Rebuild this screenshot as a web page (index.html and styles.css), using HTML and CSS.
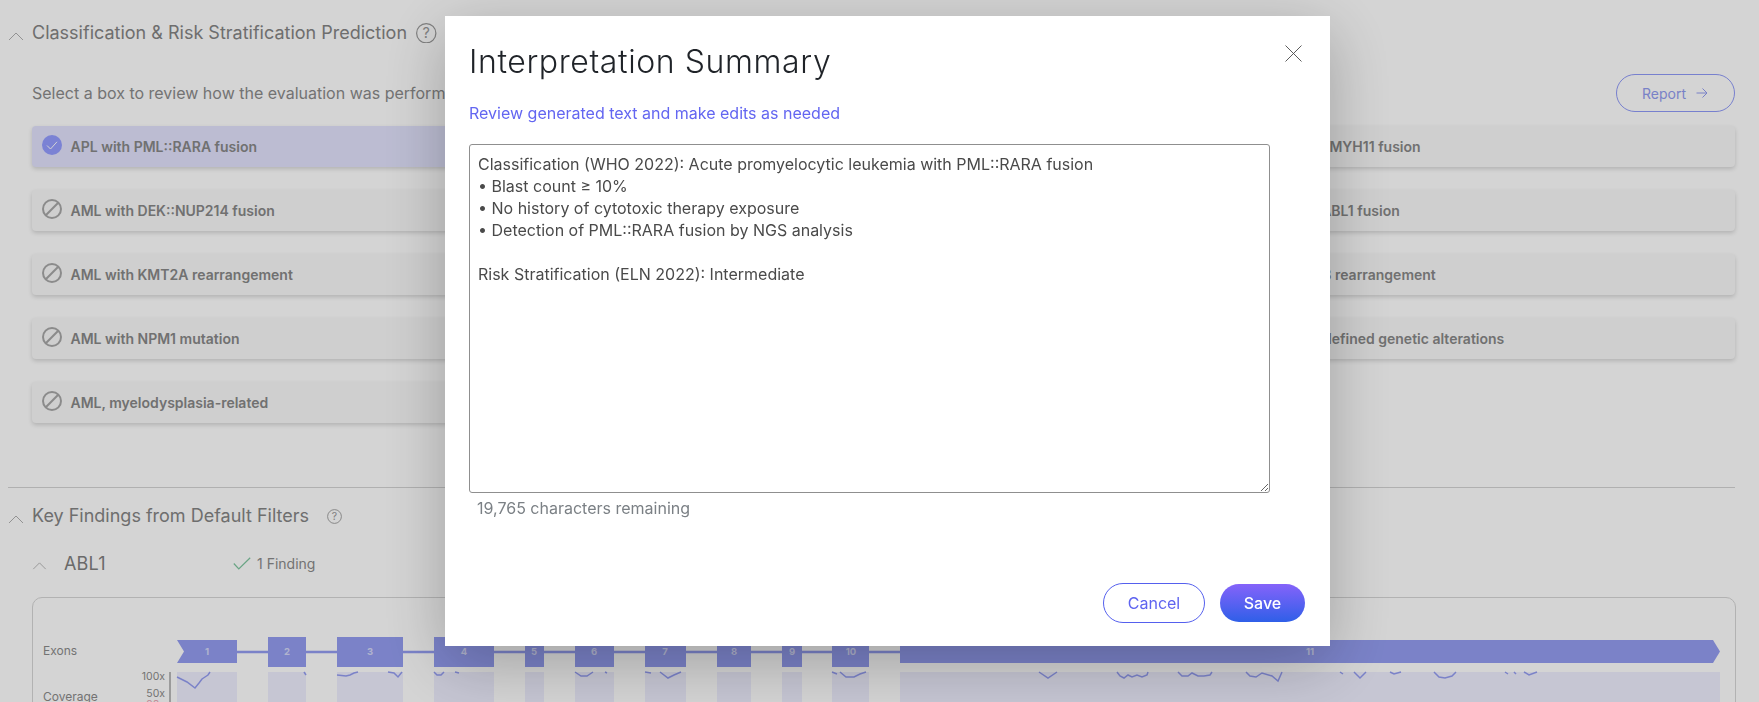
FILE: index.html
```html
<!DOCTYPE html>
<html lang="en">
<head>
<meta charset="utf-8">
<title>Interpretation Summary</title>
<link rel="stylesheet" href="styles.css">
</head>
<body>
<main class="page">
  <section class="classification">
    <header class="section-head">
      <svg class="chevron" viewBox="0 0 16 9"><path d="M1 8 8 1l7 7"/></svg>
      <h2>Classification &amp; Risk Stratification Prediction</h2>
      <svg class="help help-lg" viewBox="0 0 20 20"><circle cx="10" cy="10" r="9.4"/><text x="10" y="14.5">?</text></svg>
    </header>
    <div class="intro">
      <p>Select a box to review how the evaluation was performed.</p>
      <button class="report">Report
        <svg viewBox="0 0 12 12"><path d="M0.5 6H11M6.5 1.5 11 6l-4.5 4.5"/></svg>
      </button>
    </div>
    <div class="grid">
      <div class="col">
        <div class="box selected">
          <svg class="status" viewBox="0 0 20 20"><circle class="fill" cx="10" cy="10" r="10"/><path class="tick" d="M5 10.5 8.5 14 15 6.8"/></svg>
          <span>APL with PML::RARA fusion</span>
        </div>
        <div class="box"><svg class="status" viewBox="0 0 20 20"><circle cx="10" cy="10" r="9"/><path d="M3.8 16.2 16.2 3.8"/></svg><span>AML with DEK::NUP214 fusion</span></div>
        <div class="box"><svg class="status" viewBox="0 0 20 20"><circle cx="10" cy="10" r="9"/><path d="M3.8 16.2 16.2 3.8"/></svg><span>AML with KMT2A rearrangement</span></div>
        <div class="box"><svg class="status" viewBox="0 0 20 20"><circle cx="10" cy="10" r="9"/><path d="M3.8 16.2 16.2 3.8"/></svg><span>AML with NPM1 mutation</span></div>
        <div class="box"><svg class="status" viewBox="0 0 20 20"><circle cx="10" cy="10" r="9"/><path d="M3.8 16.2 16.2 3.8"/></svg><span>AML, myelodysplasia-related</span></div>
      </div>
      <div class="col"></div>
      <div class="col">
        <div class="box"><svg class="status" viewBox="0 0 20 20"><circle cx="10" cy="10" r="9"/><path d="M3.8 16.2 16.2 3.8"/></svg><span>AML with CBFB::MYH11 fusion</span></div>
        <div class="box"><svg class="status" viewBox="0 0 20 20"><circle cx="10" cy="10" r="9"/><path d="M3.8 16.2 16.2 3.8"/></svg><span>AML with BCR::ABL1 fusion</span></div>
        <div class="box"><svg class="status" viewBox="0 0 20 20"><circle cx="10" cy="10" r="9"/><path d="M3.8 16.2 16.2 3.8"/></svg><span>AML with NUP98 rearrangement</span></div>
        <div class="box"><svg class="status" viewBox="0 0 20 20"><circle cx="10" cy="10" r="9"/><path d="M3.8 16.2 16.2 3.8"/></svg><span>AML with other defined genetic alterations</span></div>
      </div>
    </div>
  </section>

  <section class="findings">
    <header class="section-head">
      <svg class="chevron" viewBox="0 0 16 9"><path d="M1 8 8 1l7 7"/></svg>
      <h2>Key Findings from Default Filters</h2>
      <svg class="help help-sm" viewBox="0 0 20 20"><circle cx="10" cy="10" r="9.2"/><text x="10" y="14.5">?</text></svg>
    </header>
    <div class="gene">
      <svg class="chevron chevron-sm" viewBox="0 0 16 9"><path d="M1 8 8 1l7 7"/></svg>
      <h3>ABL1</h3>
      <svg class="found-tick" viewBox="0 0 18 13"><path d="M0.8 6.5 5.800 12 17.200 0.8"/></svg>
      <span class="found">1 Finding</span>
    </div>
    <div class="track">
      <svg class="track-svg" viewBox="0 0 1701 110">
        <g class="cov-bg">
          <rect x="145" y="75" width="60" height="35"/>
          <rect x="236" y="75" width="38" height="35"/>
          <rect x="305" y="75" width="66" height="35"/>
          <rect x="402" y="75" width="60" height="35"/>
          <rect x="493" y="75" width="19" height="35"/>
          <rect x="543" y="75" width="39" height="35"/>
          <rect x="613" y="75" width="41" height="35"/>
          <rect x="685" y="75" width="34" height="35"/>
          <rect x="750" y="75" width="20" height="35"/>
          <rect x="800" y="75" width="37" height="35"/>
          <rect x="868" y="75" width="820" height="35"/>
        </g>
        <path class="intron" d="M180 55H868"/>
        <g class="exon">
          <path d="M145 43H205V66H145L152 54.500Z"/>
          <rect x="236" y="40" width="38" height="30"/>
          <rect x="305" y="40" width="66" height="30"/>
          <rect x="402" y="40" width="60" height="30"/>
          <rect x="493" y="40" width="19" height="30"/>
          <rect x="543" y="40" width="39" height="30"/>
          <rect x="613" y="40" width="41" height="30"/>
          <rect x="685" y="40" width="34" height="30"/>
          <rect x="750" y="40" width="20" height="30"/>
          <rect x="800" y="40" width="37" height="30"/>
          <path d="M868 43H1681L1688 54.500 1681 66H868Z"/>
        </g>
        <g class="exon-num">
          <text x="175" y="58">1</text><text x="255" y="58">2</text><text x="338" y="58">3</text>
          <text x="432" y="58">4</text><text x="502" y="58">5</text><text x="562" y="58">6</text>
          <text x="633" y="58">7</text><text x="702" y="58">8</text><text x="760" y="58">9</text>
          <text x="819" y="58">10</text><text x="1278" y="58">11</text>
        </g>
        <text class="row-label" x="11" y="58">Exons</text>
        <text class="row-label" x="11" y="104">Coverage</text>
        <text class="axis-label" x="133" y="83">100x</text>
        <text class="axis-label" x="133" y="100">50x</text>
        <text class="axis-label low" x="133" y="111">20x</text>
        <path class="axis" d="M138 75V110"/>
        <g class="cov-line">
          <path d="M145 80 155 85 163 91 167 86 170 82 173 80 176 78 178 75"/>
          <path d="M272 75 274 78"/>
          <path d="M305 78 314 79 318 78 322 76 326 75"/>
          <path d="M356 75 362 76 366 80 370 75"/>
          <path d="M402 75 405 78 409 78 412 75M423 75 427 76"/>
          <path d="M543 75 549 79 555 79 561 75M573 75 575 76"/>
          <path d="M613 75 619 76M628 75 636 81 642 78 649 75"/>
          <path d="M800 75 805 77M808 75 814 80 822 80 828 77 834 75"/>
          <path d="M1007 75 1016 81 1025 75"/>
          <path d="M1085 75 1088 79 1092 81 1096 78 1100 80 1105 78 1110 80 1115 78 1116 75"/>
          <path d="M1146 75 1150 79 1156 79 1160 76 1166 79 1172 79 1178 78 1180 75"/>
          <path d="M1214 75 1218 79 1224 80 1230 76 1240 79 1246 84 1250 75"/>
          <path d="M1308 75 1311 77M1322 75 1328 81 1334 75"/>
          <path d="M1358 75 1362 77 1369 75"/>
          <path d="M1402 75 1407 80 1413 81 1420 79 1424 75"/>
          <path d="M1473 75 1476 77M1482 75 1484 77M1492 75 1497 78 1505 75"/>
        </g>
      </svg>
    </div>
  </section>
</main>

<div class="backdrop">
  <div class="modal" role="dialog" aria-labelledby="modal-title">
    <header class="modal-head">
      <h1 id="modal-title">Interpretation Summary</h1>
      <button class="close" aria-label="Close"><svg viewBox="0 0 17 17"><path d="M0.5 0.500 16.500 16.500M16.500 0.500 0.500 16.500"/></svg></button>
    </header>
    <p class="modal-sub">Review generated text and make edits as needed</p>
    <textarea class="summary" spellcheck="false">Classification (WHO 2022): Acute promyelocytic leukemia with PML::RARA fusion
• Blast count ≥ 10%
• No history of cytotoxic therapy exposure
• Detection of PML::RARA fusion by NGS analysis

Risk Stratification (ELN 2022): Intermediate</textarea>
    <p class="remaining">19,765 characters remaining</p>
    <footer class="modal-foot">
      <button class="btn-cancel">Cancel</button>
      <button class="btn-save">Save</button>
    </footer>
  </div>
</div>
</body>
</html>
```

FILE: styles.css
```css
* { box-sizing: border-box; }

html, body {
  margin: 0;
  height: 100%;
  overflow: hidden;
  background: #fff;
  font-family: Inter, "Liberation Sans", sans-serif;
}

h1, h2, h3, p { margin: 0; font-weight: 400; }
button { font-family: inherit; cursor: pointer; }

.page { padding: 0 24px 0 8px; height: 702px; overflow: hidden; }

.section-head { display: flex; align-items: center; height: 24px; }
.section-head h2 { font-size: 18px; line-height: 24px; color: #858585; }

.chevron { width: 16px; height: 9px; margin-right: 8px; margin-top: 6px; flex: none; fill: none; stroke: #b0b0b0; stroke-width: 1; }
.chevron-sm { margin-top: 6px; }

.classification { padding-top: 21px; height: 488px; border-bottom: 1px solid #d4d4d4; }
.help { flex: none; fill: none; }
.help circle { stroke: #9a9a9a; stroke-width: 1.2; }
.help text { fill: #9a9a9a; font-size: 14px; text-anchor: middle; }
.help-lg { width: 20.500px; height: 20.500px; margin-left: 9px; }
.help-sm { width: 15px; height: 15px; margin-left: 18px; }

.intro { display: flex; justify-content: space-between; align-items: center; margin: 29px 0 0 24px; height: 38px; }
.intro p { font-size: 16px; color: #8b8b8b; }

.report {
  display: flex; align-items: center; gap: 10px;
  width: 119px; height: 38px; padding: 0 0 0 25px;
  border: 1px solid #909af8; border-radius: 19px; background: transparent;
  color: #929cf0; font-size: 14px;
}
.report svg { width: 12px; height: 12px; fill: none; stroke: #929cf0; stroke-width: 1; }

.grid { display: grid; grid-template-columns: repeat(3, 1fr); gap: 16px; margin: 14px 0 0 24px; }
.col { display: flex; flex-direction: column; gap: 23px; }

.box {
  display: flex; align-items: center; gap: 8.500px; height: 41px; padding: 0 10px;
  background: #f9f9f9; border-radius: 4px;
  box-shadow: 0 2px 4px rgba(0, 0, 0, 0.16);
  font-size: 14px; font-weight: 600; color: #888;
}
.box.selected { background: #e2e3fd; }
.status { width: 20px; height: 20px; margin-top: -4px; flex: none; fill: none; stroke: #a8a8a8; stroke-width: 2; }
.status .fill { fill: #949dff; stroke: none; }
.status .tick { stroke: #fff; stroke-width: 1; }

.findings { padding-top: 16px; }
.gene { display: flex; align-items: center; height: 24px; margin: 23px 0 0 24px; }
.gene .chevron { width: 15px; height: 8px; margin-right: 17px; }
.gene h3 { font-size: 18px; color: #808080; width: 169px; letter-spacing: 0.2px; }
.found-tick { width: 18px; height: 13px; fill: none; stroke: #7fc6a0; stroke-width: 1.2; margin-right: 6px; }
.found { font-size: 14px; color: #8b8b8b; }

.track {
  margin: 22px -1px 0 24px; height: 130px;
  border: 1px solid #d6d6d6; border-radius: 10px;
}
.track-svg { display: block; width: 1701px; height: 110px; margin: -1px; overflow: hidden; }
.cov-bg rect { fill: #eeeefe; }
.intron { stroke: #949df1; stroke-width: 2.500; fill: none; }
.exon { fill: #949df1; }
.exon-num text { fill: #d5d8f8; font-size: 9.500px; font-weight: 700; text-anchor: middle; }
.row-label { fill: #8b8b8b; font-size: 12px; }
.axis-label { fill: #8b8b8b; font-size: 10.500px; text-anchor: end; }
.axis-label.low { fill: #e8a0b0; }
.axis { stroke: #777; stroke-width: 1; }
.cov-line path { fill: none; stroke: #949df1; stroke-width: 1.500; }

.backdrop { position: fixed; inset: 0; background: rgba(0, 0, 0, 0.17); }
.modal {
  position: absolute; left: 445px; top: 16px;
  width: 885px; height: 630px; padding: 27px 25px 23px 24px;
  display: flex; flex-direction: column;
  background: #fff;
  box-shadow: 0 16px 60px rgba(0, 0, 0, 0.25);
}
.modal-head { display: flex; justify-content: space-between; align-items: flex-start; height: 37px; }
.modal-head h1 { font-size: 32px; line-height: 38px; font-weight: 300; color: #1f2328; letter-spacing: 0.6px; }
.close { width: 17px; height: 17px; margin: 2px 3px 0 0; padding: 0; border: 0; background: none; }
.close svg { display: block; width: 17px; height: 17px; fill: none; stroke: #4a4a4a; stroke-width: 0.9; }

.modal-sub { margin-top: 23px; font-size: 16px; line-height: 20px; color: #6366f1; }

.summary {
  display: block; width: 801px; height: 349px; margin-top: 21px; padding: 8px;
  border: 1px solid #8f8f8f; border-radius: 3px; outline: none;
  font-family: inherit; font-size: 16px; line-height: 22px; color: #4a4a4a; resize: both;
}
.remaining { margin: 5px 0 0 8px; font-size: 16px; line-height: 20px; color: #7b8085; }

.modal-foot { display: flex; justify-content: flex-end; gap: 15px; align-items: center; margin-top: auto; }
.btn-cancel {
  width: 102px; height: 40px; border: 1px solid #5560ee; border-radius: 20px; background: #fff;
  color: #5f64f0; font-size: 16px;
}
.btn-save {
  width: 85px; height: 38px; border: 0; border-radius: 19px;
  background: linear-gradient(180deg, #8563fa, #2f5fe8);
  color: #fff; font-size: 16px; font-weight: 500;
}
```
